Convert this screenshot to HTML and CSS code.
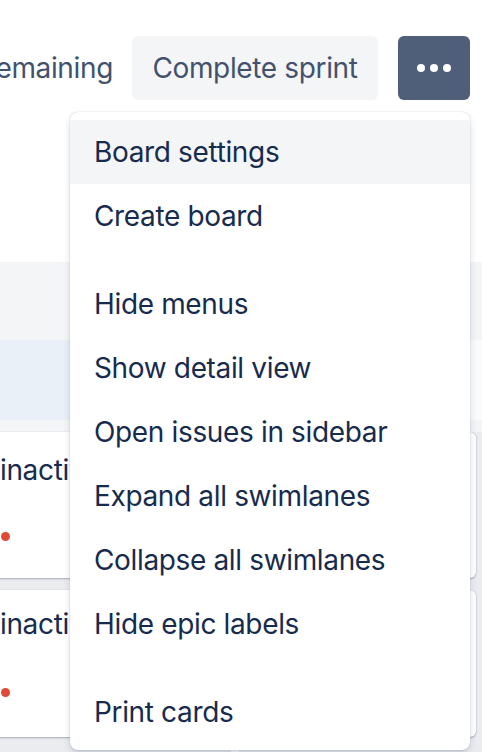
FILE: index.html
```html
<!DOCTYPE html>
<html>
<head>
<meta charset="utf-8">
<link rel="stylesheet" href="styles.css">
</head>
<body>
<div class="page">
  <div class="header">
    <span class="remaining">2 days remaining</span>
    <button class="btn-complete">Complete sprint</button>
    <button class="btn-more" aria-label="More">
      <span class="dot"></span><span class="dot"></span><span class="dot"></span>
    </button>
  </div>
  <div class="spacer"></div>
  <div class="col-headers"></div>
  <div class="lane">
    <div class="lane-left"></div>
    <div class="lane-right"></div>
  </div>
  <div class="board">
    <div class="column">
      <div class="card">
        <div class="card-title">inactive users cleanup</div>
        <div class="card-meta"><span class="prio"></span></div>
      </div>
      <div class="card">
        <div class="card-title">inactive accounts report</div>
        <div class="card-meta"><span class="prio"></span></div>
      </div>
    </div>
    <div class="column">
      <div class="card"></div>
      <div class="card"></div>
    </div>
  </div>

  <div class="menu">
    <div class="group">
      <div class="item active">Board settings</div>
      <div class="item">Create board</div>
    </div>
    <div class="group">
      <div class="item">Hide menus</div>
      <div class="item">Show detail view</div>
      <div class="item">Open issues in sidebar</div>
      <div class="item">Expand all swimlanes</div>
      <div class="item">Collapse all swimlanes</div>
      <div class="item">Hide epic labels</div>
    </div>
    <div class="group">
      <div class="item">Print cards</div>
    </div>
  </div>
</div>
</body>
</html>
```
FILE: styles.css
```css
* { box-sizing: border-box; }
html, body { margin: 0; padding: 0; }
body {
  width: 482px;
  height: 752px;
  overflow: hidden;
  background: #ffffff;
  font-family: Inter, "Noto Sans", "Liberation Sans", sans-serif;
  color: #172B4D;
  letter-spacing: -0.35px;
}
.page {
  position: relative;
  width: 482px;
  height: 752px;
  overflow: hidden;
}
.header {
  display: flex;
  justify-content: flex-end;
  align-items: center;
  gap: 19px;
  padding: 36px 12px 0 0;
  height: 100px;
  white-space: nowrap;
}
.remaining {
  font-size: 28px;
  color: #42526E;
  flex: none;
}
.btn-complete {
  flex: none;
  width: 246px;
  height: 64px;
  padding: 0;
  border: none;
  border-radius: 6px;
  background: #F4F5F7;
  color: #42526E;
  font-family: inherit;
  letter-spacing: inherit;
  font-size: 28px;
}
.btn-more {
  flex: none;
  width: 72px;
  height: 64px;
  margin-left: 1px;
  border: none;
  border-radius: 6px;
  background: #505F79;
  display: flex;
  align-items: center;
  justify-content: center;
  gap: 5px;
  padding: 0;
}
.dot {
  width: 8px;
  height: 8px;
  border-radius: 50%;
  background: #ffffff;
}
.spacer { height: 162px; }
.col-headers {
  height: 78px;
  background: #F4F5F7;
}
.lane {
  display: grid;
  grid-template-columns: 1fr 1fr;
  height: 80px;
}
.lane-left { background: #EAF0F8; }
.lane-right { background: #FAFBFC; }
.board {
  display: grid;
  grid-template-columns: 1fr 1fr;
  gap: 8px;
  margin: 0 -12px 0 -24px;
  height: 340px;
}
.column {
  background: #EBECF0;
  background-image: linear-gradient(#F4F5F7 0, #F4F5F7 12px, transparent 12px);
  padding: 12px 18px 0 0;
  display: flex;
  flex-direction: column;
  gap: 12px;
}
.column:first-child { padding-left: 0; }
.card {
  height: 146px;
  background: #ffffff;
  border-radius: 6px;
  box-shadow: 0 1px 2px rgba(9, 30, 66, 0.3), 0 0 1px rgba(9, 30, 66, 0.2);
  padding: 20px 0 0 24px;
}
.card + .card { padding-top: 16px; }
.card:last-child { height: 147px; }
.card-title {
  width: 70px;
  overflow: hidden;
  font-size: 28px;
  line-height: 36px;
  white-space: nowrap;
  color: #172B4D;
}
.card-meta {
  margin-top: 38px;
  height: 20px;
  display: flex;
  align-items: center;
}
.card + .card .card-meta { margin-top: 40px; }
.prio {
  width: 9px;
  height: 9px;
  margin-left: 1px;
  border-radius: 50%;
  background: #DE4A35;
}
.menu {
  position: absolute;
  left: 70px;
  top: 112px;
  width: 400px;
  height: 638px;
  background: #ffffff;
  border-radius: 8px;
  box-shadow: 0 4px 8px -2px rgba(9, 30, 66, 0.25), 0 0 1px rgba(9, 30, 66, 0.31);
  padding: 8px 0 6px;
  display: flex;
  flex-direction: column;
  gap: 24px;
}
.item {
  height: 64px;
  display: flex;
  align-items: center;
  padding-left: 24px;
  font-size: 28px;
  color: #172B4D;
  white-space: nowrap;
}
.item.active { background: #F4F5F7; }
```
